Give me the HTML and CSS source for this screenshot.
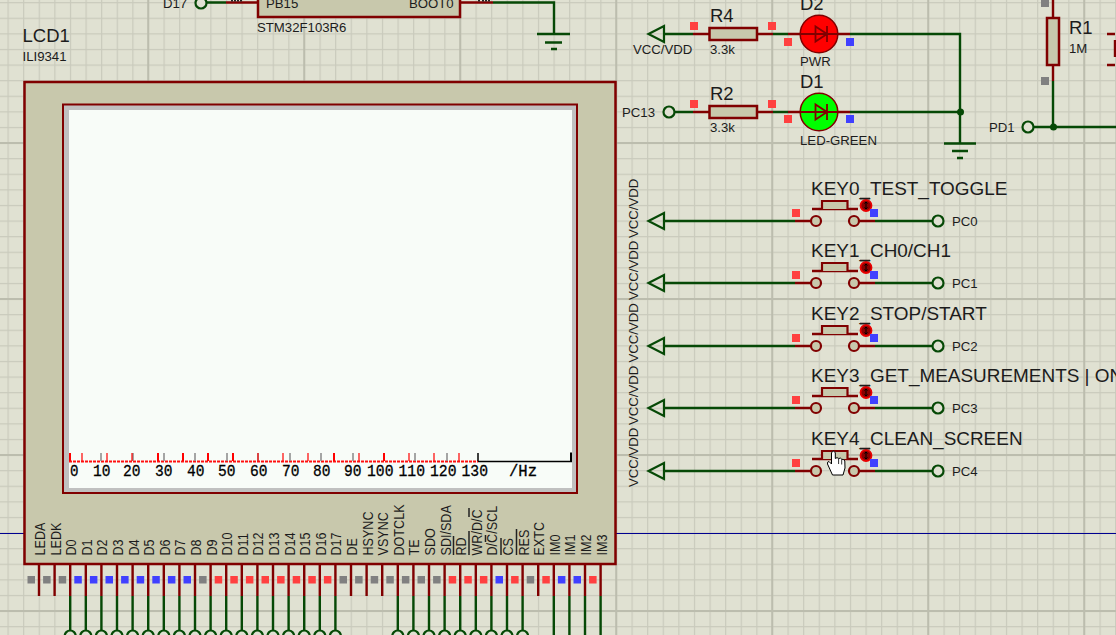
FILE: index.html
```html
<!DOCTYPE html>
<html lang="en">
<head>
<meta charset="utf-8">
<title>LCD1 schematic</title>
<link rel="stylesheet" href="styles.css">
</head>
<body>
<main class="sheet">
<svg class="schematic" width="1116" height="635" viewBox="0 0 1116 635" xmlns="http://www.w3.org/2000/svg">
  <defs>
    <pattern id="grid-minor" patternUnits="userSpaceOnUse" width="15.6" height="15.6" x="7.5" y="2.1">
      <path class="grid-line" d="M.6 0V15.6M0 .6H15.6"/>
    </pattern>
    <pattern id="grid-major" patternUnits="userSpaceOnUse" width="156" height="156" x="147" y="142">
      <path class="grid-major-line" d="M1.2 0V156M0 1H156"/>
    </pattern>
    <g id="pin-open"><path class="wire-red" d="M0 564V596"/></g>
    <g id="pin-term"><path class="wire-red" d="M0 564V596"/><path class="wire-green" d="M0 596V630"/><circle class="term" cx="0" cy="636" r="5.5"/></g>
    <g id="pin-wire"><path class="wire-red" d="M0 564V596"/><path class="wire-green" d="M0 596V635"/></g>
    <g id="key">
      <path class="wire-green" d="M664 0H795"/>
      <path class="arrow" d="M648.5 0L664 -8V8Z"/>
      <path class="wire-red" d="M795 0H811M859 0H875"/>
      <circle class="pad" cx="816" cy="0" r="5"/>
      <circle class="pad" cx="854" cy="0" r="5"/>
      <path class="wire-red" d="M812 -12H858"/>
      <path class="cap" d="M822 -12V-20H847.500V-12"/>
      <path class="wire-green" d="M875 0H932"/>
      <circle class="term" cx="938" cy="0" r="5.500"/>
      <path class="probe-bar" d="M860 -22.500H870"/>
      <circle class="probe" cx="866" cy="-15.500" r="5.500"/>
      <path class="probe-arrow" d="M866 -19V-12M864.500 -17.500L866 -19L867.500 -17.500M864.500 -13.500L866 -12L867.500 -13.500"/>
      <rect class="sq sq-red" x="792" y="-12" width="8" height="8"/>
      <rect class="sq sq-blue" x="870" y="-12" width="8" height="8"/>
    </g>
  </defs>

  <rect class="paper" width="1116" height="635"/>
  <rect fill="url(#grid-minor)" width="1116" height="635"/>
  <rect fill="url(#grid-major)" width="1116" height="635"/>
  <path class="guide" d="M0 533.500H1116"/>

  <!-- STM32 chip fragment -->
  <rect class="body" x="258" y="-6" width="202" height="23"/>
  <path class="wire-green" d="M207 2.500H226M493 2.500H554V34"/>
  <path class="wire-red" d="M226 2.500H258M460 2.500H493"/>
  <circle class="term" cx="201" cy="3" r="5.500"/>
  <path class="pin-num" d="M232 0V1.500M235 0V1.500M238 0V1.500M241 0V1.500M479 0V1.500M483 0V1.500M486 0V1.500M489 0V1.500"/>
  <text class="t13" x="163" y="8">D17</text>
  <text class="t13" x="266" y="8">PB15</text>
  <text class="t13" x="409" y="8">BOOT0</text>
  <text class="t13" x="257" y="32">STM32F103R6</text>
  <path class="wire-green" d="M537 34H570M545 42.500H562M551 49H557"/>

  <!-- LCD module -->
  <text class="t18" x="22.500" y="42">LCD1</text>
  <text class="t13" x="22.500" y="61">ILI9341</text>
  <rect class="body" x="24.500" y="82" width="591" height="482"/>
  <rect class="bezel" x="63" y="104.500" width="514" height="388.500"/>
  <rect class="screen" x="69" y="110" width="503" height="378"/>

  <path class="axis-base" d="M69 461.500H478"/>
  <path class="tick-gray" d="M101 453V461M133 453V461M164 453V461M195 453V461M227 453V461M258 453V461M290 453V461M321 453V461M353 453V461M384 453V461M415 453V461M447 453V461"/>
  <path class="tick-red" d="M82 453V461M107 453V461M132 453V461M258 453V461M283 453V461M308 453V461M359 453V461M409 453V461M434 453V461M459 453V461"/>
  <path class="tick-red-bold" d="M70 453V461M158 453V461M183 453V461M208 453V461M233 453V461M334 453V461M384 453V461"/>
  <path class="axis-black" d="M478 461.500H572M478 453V461"/>
  <path class="axis-end" d="M571 452.500V461"/>
  <text class="lcd" x="70" y="476" textLength="8.500" lengthAdjust="spacingAndGlyphs">0</text>
  <text class="lcd" x="93" y="476" textLength="17.500" lengthAdjust="spacingAndGlyphs">10</text>
  <text class="lcd" x="123" y="476" textLength="17.500" lengthAdjust="spacingAndGlyphs">20</text>
  <text class="lcd" x="155" y="476" textLength="17.500" lengthAdjust="spacingAndGlyphs">30</text>
  <text class="lcd" x="187" y="476" textLength="17.500" lengthAdjust="spacingAndGlyphs">40</text>
  <text class="lcd" x="218" y="476" textLength="17.500" lengthAdjust="spacingAndGlyphs">50</text>
  <text class="lcd" x="250" y="476" textLength="17.500" lengthAdjust="spacingAndGlyphs">60</text>
  <text class="lcd" x="282" y="476" textLength="17.500" lengthAdjust="spacingAndGlyphs">70</text>
  <text class="lcd" x="313" y="476" textLength="17.500" lengthAdjust="spacingAndGlyphs">80</text>
  <text class="lcd" x="344" y="476" textLength="17.500" lengthAdjust="spacingAndGlyphs">90</text>
  <text class="lcd" x="367" y="476" textLength="26.500" lengthAdjust="spacingAndGlyphs">100</text>
  <text class="lcd" x="398.500" y="476" textLength="26.500" lengthAdjust="spacingAndGlyphs">110</text>
  <text class="lcd" x="430" y="476" textLength="26.500" lengthAdjust="spacingAndGlyphs">120</text>
  <text class="lcd" x="461.500" y="476" textLength="26.500" lengthAdjust="spacingAndGlyphs">130</text>
  <text class="lcd" x="509" y="476" textLength="28" lengthAdjust="spacingAndGlyphs">/Hz</text>

  <!-- LCD pin labels -->
  <text class="pin-label" transform="translate(45 555.500) rotate(-90) scale(.9 1)">LEDA</text>
  <text class="pin-label" transform="translate(60.600 555.500) rotate(-90) scale(.9 1)">LEDK</text>
  <text class="pin-label" transform="translate(76.200 555.500) rotate(-90) scale(.9 1)">D0</text>
  <text class="pin-label" transform="translate(91.800 555.500) rotate(-90) scale(.9 1)">D1</text>
  <text class="pin-label" transform="translate(107.400 555.500) rotate(-90) scale(.9 1)">D2</text>
  <text class="pin-label" transform="translate(123 555.500) rotate(-90) scale(.9 1)">D3</text>
  <text class="pin-label" transform="translate(138.600 555.500) rotate(-90) scale(.9 1)">D4</text>
  <text class="pin-label" transform="translate(154.200 555.500) rotate(-90) scale(.9 1)">D5</text>
  <text class="pin-label" transform="translate(169.800 555.500) rotate(-90) scale(.9 1)">D6</text>
  <text class="pin-label" transform="translate(185.400 555.500) rotate(-90) scale(.9 1)">D7</text>
  <text class="pin-label" transform="translate(201 555.500) rotate(-90) scale(.9 1)">D8</text>
  <text class="pin-label" transform="translate(216.600 555.500) rotate(-90) scale(.9 1)">D9</text>
  <text class="pin-label" transform="translate(232.200 555.500) rotate(-90) scale(.9 1)">D10</text>
  <text class="pin-label" transform="translate(247.800 555.500) rotate(-90) scale(.9 1)">D11</text>
  <text class="pin-label" transform="translate(263.400 555.500) rotate(-90) scale(.9 1)">D12</text>
  <text class="pin-label" transform="translate(279 555.500) rotate(-90) scale(.9 1)">D13</text>
  <text class="pin-label" transform="translate(294.600 555.500) rotate(-90) scale(.9 1)">D14</text>
  <text class="pin-label" transform="translate(310.200 555.500) rotate(-90) scale(.9 1)">D15</text>
  <text class="pin-label" transform="translate(325.800 555.500) rotate(-90) scale(.9 1)">D16</text>
  <text class="pin-label" transform="translate(341.400 555.500) rotate(-90) scale(.9 1)">D17</text>
  <text class="pin-label" transform="translate(357 555.500) rotate(-90) scale(.9 1)">DE</text>
  <text class="pin-label" transform="translate(372.600 555.500) rotate(-90) scale(.9 1)">HSYNC</text>
  <text class="pin-label" transform="translate(388.200 555.500) rotate(-90) scale(.9 1)">VSYNC</text>
  <text class="pin-label" transform="translate(403.800 555.500) rotate(-90) scale(.9 1)">DOTCLK</text>
  <text class="pin-label" transform="translate(419.400 555.500) rotate(-90) scale(.9 1)">TE</text>
  <text class="pin-label" transform="translate(435 555.500) rotate(-90) scale(.9 1)">SDO</text>
  <text class="pin-label" transform="translate(450.600 555.500) rotate(-90) scale(.9 1)">SDI/SDA</text>
  <text class="pin-label" transform="translate(466.200 555.500) rotate(-90) scale(.9 1)">RD</text>
  <text class="pin-label" transform="translate(481.800 555.500) rotate(-90) scale(.9 1)">WR/D/C</text>
  <text class="pin-label" transform="translate(497.400 555.500) rotate(-90) scale(.9 1)">D/C/SCL</text>
  <text class="pin-label" transform="translate(513 555.500) rotate(-90) scale(.9 1)">CS</text>
  <text class="pin-label" transform="translate(528.600 555.500) rotate(-90) scale(.9 1)">RES</text>
  <text class="pin-label" transform="translate(544.200 555.500) rotate(-90) scale(.9 1)">EXTC</text>
  <text class="pin-label" transform="translate(559.800 555.500) rotate(-90) scale(.9 1)">IM0</text>
  <text class="pin-label" transform="translate(575.400 555.500) rotate(-90) scale(.9 1)">IM1</text>
  <text class="pin-label" transform="translate(591 555.500) rotate(-90) scale(.9 1)">IM2</text>
  <text class="pin-label" transform="translate(606.600 555.500) rotate(-90) scale(.9 1)">IM3</text>
  <path class="overbar" d="M453.500 536V555M469 531V555M469 508V517M485.500 535V542M501 538V555M516.500 529V555"/>

  <!-- LCD pins -->
  <use href="#pin-open" x="39"/><use href="#pin-open" x="54.600"/>
  <use href="#pin-term" x="70.200"/><use href="#pin-term" x="85.800"/><use href="#pin-term" x="101.400"/><use href="#pin-term" x="117"/>
  <use href="#pin-term" x="132.600"/><use href="#pin-term" x="148.200"/><use href="#pin-term" x="163.800"/><use href="#pin-term" x="179.400"/>
  <use href="#pin-term" x="195"/><use href="#pin-term" x="210.600"/><use href="#pin-term" x="226.200"/><use href="#pin-term" x="241.800"/>
  <use href="#pin-term" x="257.400"/><use href="#pin-term" x="273"/><use href="#pin-term" x="288.600"/><use href="#pin-term" x="304.200"/>
  <use href="#pin-term" x="319.800"/><use href="#pin-term" x="335.400"/>
  <use href="#pin-open" x="351"/><use href="#pin-open" x="366.600"/><use href="#pin-open" x="382.200"/>
  <use href="#pin-term" x="397.800"/><use href="#pin-term" x="413.400"/><use href="#pin-term" x="429"/><use href="#pin-term" x="444.600"/>
  <use href="#pin-term" x="460.200"/><use href="#pin-term" x="475.800"/><use href="#pin-term" x="491.400"/><use href="#pin-term" x="507"/><use href="#pin-term" x="522.600"/>
  <use href="#pin-open" x="538.200"/>
  <use href="#pin-wire" x="553.800"/><use href="#pin-wire" x="569.400"/><use href="#pin-wire" x="585"/><use href="#pin-wire" x="600.600"/>

  <!-- Logic state markers under the LCD -->
  <rect class="sq sq-gray" x="27.500" y="576" width="7.500" height="7.500"/><rect class="sq sq-gray" x="43.100" y="576" width="7.500" height="7.500"/><rect class="sq sq-gray" x="58.700" y="576" width="7.500" height="7.500"/>
  <rect class="sq sq-blue" x="74.300" y="576" width="7.500" height="7.500"/><rect class="sq sq-blue" x="89.900" y="576" width="7.500" height="7.500"/><rect class="sq sq-blue" x="105.500" y="576" width="7.500" height="7.500"/><rect class="sq sq-blue" x="121.100" y="576" width="7.500" height="7.500"/>
  <rect class="sq sq-blue" x="136.700" y="576" width="7.500" height="7.500"/><rect class="sq sq-blue" x="152.300" y="576" width="7.500" height="7.500"/><rect class="sq sq-blue" x="167.900" y="576" width="7.500" height="7.500"/><rect class="sq sq-blue" x="183.500" y="576" width="7.500" height="7.500"/>
  <rect class="sq sq-gray" x="199.100" y="576" width="7.500" height="7.500"/>
  <rect class="sq sq-red" x="214.700" y="576" width="7.500" height="7.500"/><rect class="sq sq-red" x="230.300" y="576" width="7.500" height="7.500"/><rect class="sq sq-red" x="245.900" y="576" width="7.500" height="7.500"/><rect class="sq sq-red" x="261.500" y="576" width="7.500" height="7.500"/>
  <rect class="sq sq-red" x="277.100" y="576" width="7.500" height="7.500"/><rect class="sq sq-red" x="292.700" y="576" width="7.500" height="7.500"/><rect class="sq sq-red" x="308.300" y="576" width="7.500" height="7.500"/><rect class="sq sq-red" x="323.900" y="576" width="7.500" height="7.500"/>
  <rect class="sq sq-gray" x="339.500" y="576" width="7.500" height="7.500"/><rect class="sq sq-gray" x="355.100" y="576" width="7.500" height="7.500"/><rect class="sq sq-gray" x="370.700" y="576" width="7.500" height="7.500"/><rect class="sq sq-gray" x="386.300" y="576" width="7.500" height="7.500"/>
  <rect class="sq sq-gray" x="401.900" y="576" width="7.500" height="7.500"/><rect class="sq sq-gray" x="417.500" y="576" width="7.500" height="7.500"/><rect class="sq sq-gray" x="433.100" y="576" width="7.500" height="7.500"/>
  <rect class="sq sq-red" x="448.700" y="576" width="7.500" height="7.500"/><rect class="sq sq-red" x="464.300" y="576" width="7.500" height="7.500"/><rect class="sq sq-red" x="479.900" y="576" width="7.500" height="7.500"/>
  <rect class="sq sq-blue" x="495.500" y="576" width="7.500" height="7.500"/>
  <rect class="sq sq-red" x="511.100" y="576" width="7.500" height="7.500"/>
  <rect class="sq sq-gray" x="526.700" y="576" width="7.500" height="7.500"/>
  <rect class="sq sq-red" x="542.300" y="576" width="7.500" height="7.500"/>
  <rect class="sq sq-blue" x="557.900" y="576" width="7.500" height="7.500"/><rect class="sq sq-blue" x="573.500" y="576" width="7.500" height="7.500"/>
  <rect class="sq sq-red" x="589.100" y="576" width="7.500" height="7.500"/>

  <!-- R4 / D2 -->
  <path class="wire-green" d="M664 34H693M773 34H788M850 34H960V143M850 112H960"/>
  <path class="arrow" d="M648.500 34L664 26V42Z"/>
  <path class="wire-red" d="M693 34H709M757 34H773M788 34H800M838 34H850"/>
  <rect class="body" x="709.500" y="28" width="47.500" height="12"/>
  <circle class="led-red" cx="819" cy="34" r="18.800"/>
  <path class="led-mark" d="M800 34H838M815.500 26.500V41.500L827 34ZM827 26V42"/>
  <text class="t18" x="710" y="22">R4</text>
  <text class="t13" x="710" y="54">3.3k</text>
  <text class="t18" x="800" y="10">D2</text>
  <text class="t13" x="800" y="66">PWR</text>
  <text class="t13" x="633" y="54">VCC/VDD</text>
  <rect class="sq sq-red" x="690" y="22" width="8" height="8"/>
  <rect class="sq sq-red" x="768" y="22" width="8" height="8"/>
  <rect class="sq sq-red" x="784" y="38" width="8" height="8"/>
  <rect class="sq sq-blue" x="846" y="38" width="8" height="8"/>

  <!-- R2 / D1 -->
  <path class="wire-green" d="M675 112H693M773 112H788"/>
  <circle class="term" cx="669" cy="112" r="5.500"/>
  <path class="wire-red" d="M693 112H709M757 112H773M788 112H800M838 112H850"/>
  <rect class="body" x="709.500" y="106" width="47.500" height="12"/>
  <circle class="led-green" cx="819" cy="112" r="18.800"/>
  <path class="led-mark" d="M800 112H838M815.500 104.500V119.500L827 112ZM827 104V120"/>
  <text class="t18" x="710" y="100">R2</text>
  <text class="t13" x="710" y="132">3.3k</text>
  <text class="t18" x="800" y="88">D1</text>
  <text class="t13" x="800" y="145">LED-GREEN</text>
  <text class="t13" x="622" y="117">PC13</text>
  <rect class="sq sq-red" x="690" y="100" width="8" height="8"/>
  <rect class="sq sq-red" x="768" y="100" width="8" height="8"/>
  <rect class="sq sq-red" x="784" y="115" width="8" height="8"/>
  <rect class="sq sq-blue" x="846" y="115" width="8" height="8"/>
  <circle class="dot" cx="960.500" cy="112" r="3.500"/>
  <path class="wire-green" d="M944 143.500H976M952 151H968M957 158H963"/>

  <!-- R1 -->
  <path class="wire-red" d="M1053 0V18M1053 65V81M1107 34H1115M1107 65H1115M1115 40V57"/>
  <path class="wire-green" d="M1053 81V127M1034 127H1116"/>
  <rect class="body" x="1047" y="18" width="12" height="47"/>
  <text class="t18" x="1069" y="34">R1</text>
  <text class="t13" x="1069" y="53">1M</text>
  <text class="t13" x="989" y="132">PD1</text>
  <circle class="term" cx="1028" cy="127" r="5.500"/>
  <circle class="dot" cx="1053.500" cy="127" r="3.500"/>
  <rect class="sq sq-gray" x="1041" y="0" width="8" height="7"/>
  <rect class="sq sq-gray" x="1041" y="77" width="8" height="8"/>

  <!-- Keys -->
  <use href="#key" y="221"/>
  <use href="#key" y="283"/>
  <use href="#key" y="346"/>
  <use href="#key" y="408"/>
  <use href="#key" y="471"/>
  <text class="t-key" x="811" y="195">KEY0_TEST_TOGGLE</text>
  <text class="t-key" x="811" y="257">KEY1_CH0/CH1</text>
  <text class="t-key" x="811" y="320">KEY2_STOP/START</text>
  <text class="t-key" x="811" y="382">KEY3_GET_MEASUREMENTS | ONE_SHOT</text>
  <text class="t-key" x="811" y="445">KEY4_CLEAN_SCREEN</text>
  <text class="t13" x="952" y="226">PC0</text>
  <text class="t13" x="952" y="288">PC1</text>
  <text class="t13" x="952" y="351">PC2</text>
  <text class="t13" x="952" y="413">PC3</text>
  <text class="t13" x="952" y="476">PC4</text>
  <text class="t13" transform="translate(637.500 238) rotate(-90)">VCC/VDD</text>
  <text class="t13" transform="translate(637.500 300) rotate(-90)">VCC/VDD</text>
  <text class="t13" transform="translate(637.500 362.500) rotate(-90)">VCC/VDD</text>
  <text class="t13" transform="translate(637.500 425) rotate(-90)">VCC/VDD</text>
  <text class="t13" transform="translate(637.500 487) rotate(-90)">VCC/VDD</text>

  <!-- Mouse cursor -->
  <path class="hand" d="M832.500 475L827.500 464Q827 461.500 829 461.500L831.500 464V452.500Q833.300 449.800 835.300 452.500V458.500Q837 456.800 838.800 458.500Q840.600 457.300 841.800 459.300Q843.800 458.800 844.800 461L845 468L843 475Z"/>
  <path class="hand-line" d="M838.600 459V464M841.700 459.500V464.500"/>
</svg>
</main>
</body>
</html>
```
FILE: styles.css
```css
html, body {
  margin: 0;
  padding: 0;
  background: #e0e1d2;
}
.sheet {
  width: 1116px;
  height: 635px;
  overflow: hidden;
}
.schematic {
  display: block;
}
.paper { fill: #e0e1d2; }
.grid-line { fill: none; stroke: #c9cabc; stroke-width: 1.200; }
.grid-major-line { fill: none; stroke: #bcbdae; stroke-width: 2; }
.guide { fill: none; stroke: #000090; stroke-width: 1; }

.wire-green { fill: none; stroke: #064906; stroke-width: 2.400; }
.wire-red { fill: none; stroke: #800000; stroke-width: 2.400; }
.term { fill: #e0e1d2; stroke: #064906; stroke-width: 2.200; }
.pad { fill: #c8c8ac; stroke: #800000; stroke-width: 2.200; }
.arrow { fill: none; stroke: #064906; stroke-width: 2.200; }
.body { fill: #c8c8ac; stroke: #800000; stroke-width: 2.500; }
.cap { fill: #c8c8ac; stroke: #800000; stroke-width: 2.200; }
.dot { fill: #064906; }
.pin-num { fill: none; stroke: #222; stroke-width: 2; }

.bezel { fill: #c0c0c0; stroke: #800000; stroke-width: 2; }
.screen { fill: #f8fcf8; }
.axis-base { fill: none; stroke: #ff1010; stroke-width: 2; stroke-dasharray: 3 1; }
.tick-gray { fill: none; stroke: #888; stroke-width: 1.500; }
.tick-red { fill: none; stroke: #ff0000; stroke-width: 1.200; }
.tick-red-bold { fill: none; stroke: #ff0000; stroke-width: 2; }
.axis-black { fill: none; stroke: #000; stroke-width: 1.500; }
.axis-end { fill: none; stroke: #000; stroke-width: 2; }

.led-red { fill: #ff0000; stroke: #800000; stroke-width: 1.500; }
.led-green { fill: #00ff00; stroke: #800000; stroke-width: 1.500; }
.led-mark { fill: none; stroke: #800000; stroke-width: 1.800; }

.sq-red { fill: #ff4040; }
.sq-blue { fill: #4040ff; }
.sq-gray { fill: #808080; }

.probe { fill: #8a0000; stroke: #e80000; stroke-width: 1.800; }
.probe-bar { fill: none; stroke: #200000; stroke-width: 1.500; }
.probe-arrow { fill: none; stroke: #000; stroke-width: 1; }

.hand { fill: #fff; stroke: #000; stroke-width: 1; stroke-linejoin: round; }
.hand-line { fill: none; stroke: #000; stroke-width: .8; }

text {
  font-family: "Liberation Sans", Arial, sans-serif;
  fill: #1c1c1c;
}
.t18 { font-size: 18.500px; }
.t13 { font-size: 13.200px; }
.t-key { font-size: 18.950px; }
.pin-label { font-size: 14px; }
.lcd {
  font-family: "Liberation Mono", "DejaVu Sans Mono", monospace;
  font-size: 16.500px;
  fill: #000;
  stroke: #000;
  stroke-width: .3;
}
.overbar { fill: none; stroke: #222; stroke-width: 1.500; }
```
